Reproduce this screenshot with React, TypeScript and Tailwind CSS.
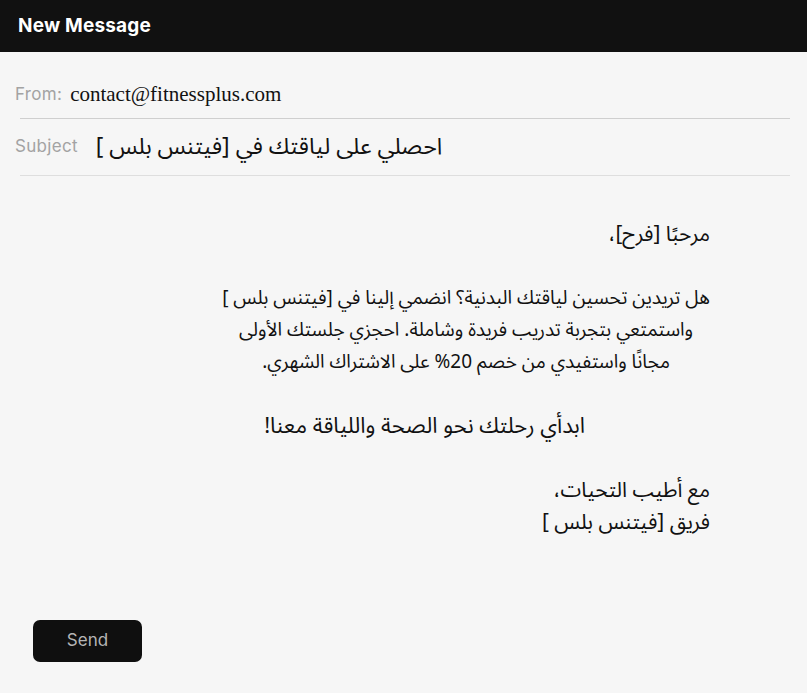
import * as React from 'react';

const arabic = "font-['Noto_Sans_Arabic','DejaVu_Sans',sans-serif]";

function FieldRow(props: { label: string; children: React.ReactNode; className?: string }) {
  return (
    <div className={`flex items-center pl-[15px] ${props.className || ''}`}>
      <span className="text-[17px] tracking-[0.3px] text-[#a3a3a3] font-['Inter',sans-serif]">{props.label}</span>
      {props.children}
    </div>
  );
}

export default function App() {
  return (
    <div className="min-h-screen bg-[#f6f6f6] text-[#111]">
      <div className="h-[52px] bg-[#111111] flex items-center px-[18px]">
        <h1 className="text-white text-[19px] font-bold font-['Inter',sans-serif] tracking-[0.2px]">New Message</h1>
      </div>

      <FieldRow label="From:" className="h-[66px] pt-[20px]">
        <span className="ml-[8px] text-[21px] font-['Liberation_Serif',serif]">contact@fitnessplus.com</span>
      </FieldRow>
      <div className="ml-[20px] mr-[17px] border-t border-[#cfcfcf]" />

      <FieldRow label="Subject" className="h-[56px]">
        <span dir="rtl" className={`ml-[18px] text-[23px] ${arabic}`}>احصلي على لياقتك في [فيتنس بلس ]</span>
      </FieldRow>
      <div className="ml-[20px] mr-[17px] border-t border-[#dedede]" />

      <div dir="rtl" className={`pt-[42px] pr-[97px] text-[21px] leading-[32px] ${arabic}`}>
        <p>مرحبًا [فرح]،</p>
        <p className="mt-[32px] text-[19px]">
          <span className="inline-block text-center whitespace-nowrap">
            هل تريدين تحسين لياقتك البدنية؟ انضمي إلينا في [فيتنس بلس ]
            <br />
            واستمتعي بتجربة تدريب فريدة وشاملة. احجزي جلستك الأولى
            <br />
            مجانًا واستفيدي من خصم 20% على الاشتراك الشهري.
          </span>
        </p>
        <p className="mt-[32px] mr-[125px] text-[22px]">ابدأي رحلتك نحو الصحة واللياقة معنا!</p>
        <p className="mt-[32px]">مع أطيب التحيات،</p>
        <p>فريق [فيتنس بلس ]</p>
      </div>

      <div className="pl-[33px] pt-[82px]">
        <button className="w-[109px] h-[42px] rounded-[7px] bg-[#0f0f0f] text-[#b5b5b5] text-[17px] font-['Inter',sans-serif]">
          Send
        </button>
      </div>
    </div>
  );
}
